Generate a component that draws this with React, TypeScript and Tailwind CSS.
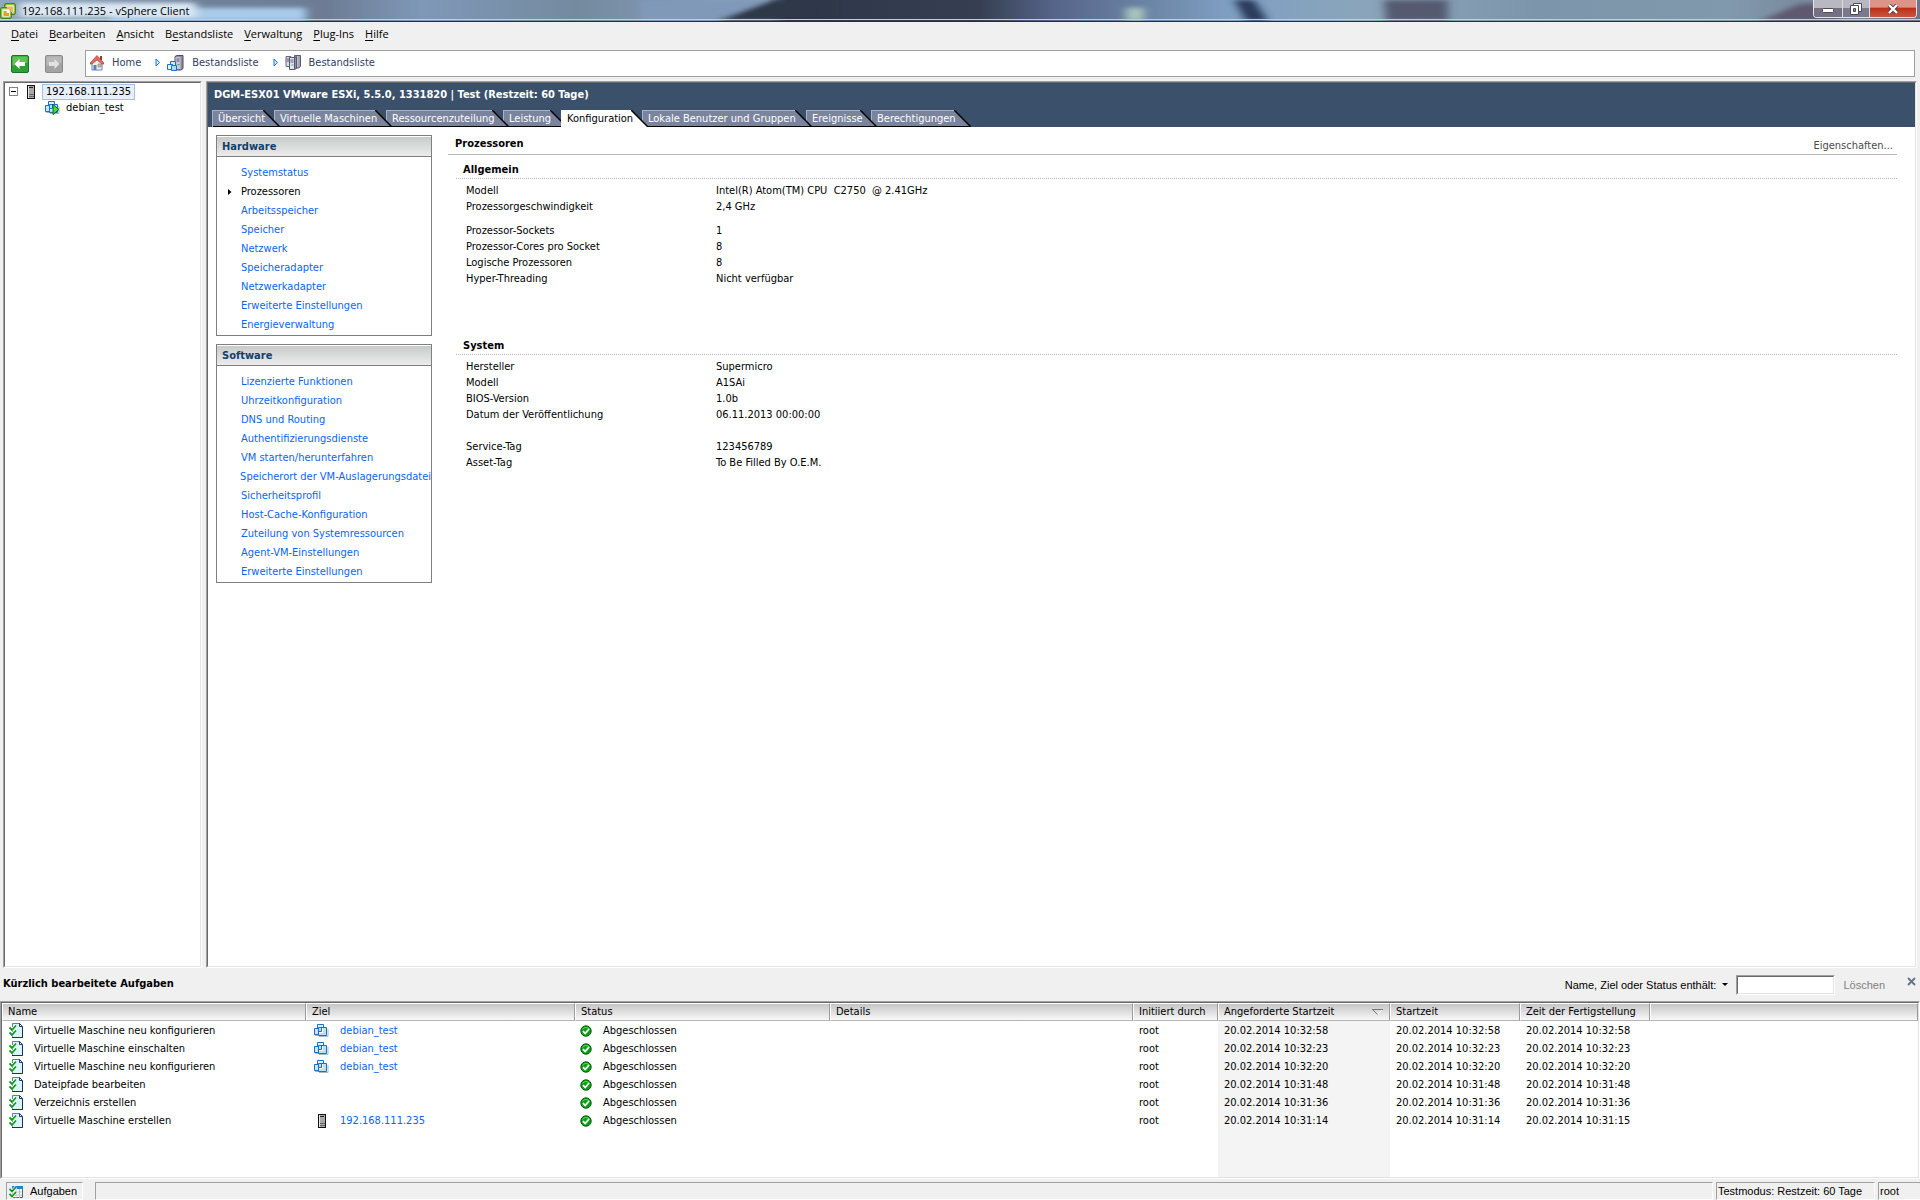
import type { ReactNode } from "react"
import clsx from "clsx"

type Task = {
  name: string
  target?: string
  host?: boolean
  started: string
  finished: string
}

const menus = [
  { before: "", key: "D", after: "atei" },
  { before: "", key: "B", after: "earbeiten" },
  { before: "", key: "A", after: "nsicht" },
  { before: "B", key: "e", after: "standsliste" },
  { before: "", key: "V", after: "erwaltung" },
  { before: "", key: "P", after: "lug-Ins" },
  { before: "", key: "H", after: "ilfe" },
]

// Every tab overlaps the next one by 6px, the left one lies on top
const tabs = [
  { label: "Übersicht", className: "w-[68px] z-8" },
  { label: "Virtuelle Maschinen", className: "w-[118px] z-7" },
  { label: "Ressourcenzuteilung", className: "w-[123px] z-6" },
  { label: "Leistung", className: "w-16 z-5" },
  { label: "Konfiguration", className: "w-[87px] z-9", active: true },
  { label: "Lokale Benutzer und Gruppen", className: "w-[170px] z-3" },
  { label: "Ereignisse", className: "w-[71px] z-2" },
  { label: "Berechtigungen", className: "w-[100px] z-1" },
]

const hardware = [
  "Systemstatus",
  "Prozessoren",
  "Arbeitsspeicher",
  "Speicher",
  "Netzwerk",
  "Speicheradapter",
  "Netzwerkadapter",
  "Erweiterte Einstellungen",
  "Energieverwaltung",
]

const software = [
  "Lizenzierte Funktionen",
  "Uhrzeitkonfiguration",
  "DNS und Routing",
  "Authentifizierungsdienste",
  "VM starten/herunterfahren",
  "Speicherort der VM-Auslagerungsdatei",
  "Sicherheitsprofil",
  "Host-Cache-Konfiguration",
  "Zuteilung von Systemressourcen",
  "Agent-VM-Einstellungen",
  "Erweiterte Einstellungen",
]

const tasks: Task[] = [
  { name: "Virtuelle Maschine neu konfigurieren", target: "debian_test", started: "20.02.2014 10:32:58", finished: "20.02.2014 10:32:58" },
  { name: "Virtuelle Maschine einschalten", target: "debian_test", started: "20.02.2014 10:32:23", finished: "20.02.2014 10:32:23" },
  { name: "Virtuelle Maschine neu konfigurieren", target: "debian_test", started: "20.02.2014 10:32:20", finished: "20.02.2014 10:32:20" },
  { name: "Dateipfade bearbeiten", started: "20.02.2014 10:31:48", finished: "20.02.2014 10:31:48" },
  { name: "Verzeichnis erstellen", started: "20.02.2014 10:31:36", finished: "20.02.2014 10:31:36" },
  { name: "Virtuelle Maschine erstellen", target: "192.168.111.235", host: true, started: "20.02.2014 10:31:14", finished: "20.02.2014 10:31:15" },
]

/* ---------- icons ---------- */

function AppIcon() {
  return (
    <svg width="16" height="16" viewBox="0 0 16 16" fill="none" aria-hidden="true">
      <rect x="5.500" y="1.500" width="9" height="9" rx="1.500" stroke="#3f6b12" strokeWidth="2.800" />
      <rect x="5.500" y="1.500" width="9" height="9" rx="1.500" fill="#f4f6ee" stroke="#8cc63f" strokeWidth="1.400" />
      <rect x="1.500" y="5.500" width="9" height="9" rx="1.500" stroke="#3f6b12" strokeWidth="2.800" />
      <rect x="1.500" y="5.500" width="9" height="9" rx="1.500" fill="#f4f6ee" stroke="#8cc63f" strokeWidth="1.400" />
      <path d="M3.500 8h3v2H9v3H3.500z" fill="#f39a1d" />
      <path d="M7 3.500h6V9h-2.500V6H7z" fill="#f7b64c" />
    </svg>
  )
}

function HostIcon() {
  return (
    <svg width="10" height="14" viewBox="0 0 10 14" shapeRendering="crispEdges" aria-hidden="true">
      <path d="M1 0h8v14H1z" fill="#111" />
      <path d="M2 1h6v12H2z" fill="#a8a8a8" />
      <path d="M2 1h1v12H2z" fill="#e6e6e6" />
      <path d="M3 2h4v1H3z" fill="#222" />
      <path d="M3 9h5v1H3zM3 11h5v1H3z" fill="#666" />
    </svg>
  )
}

function VmIcon({ running = false }: { running?: boolean }) {
  return (
    <svg width="15" height="14" viewBox="0 0 15 14" aria-hidden="true">
      <path d="M5 12.500h9V5M1 11.500h4" fill="none" stroke="#a9b8c6" />
      <path d="M3.500.5h6v7h-6z" fill="#d9f1fc" stroke="#1c6fc4" />
      <path d="M.5 4.500h7v6h-7z" fill="#c2e9fb" stroke="#1c6fc4" />
      <path d="M4.500 3.500h8v8h-8z" fill="#b4e2f8" stroke="#1c6fc4" />
      <path d="M5 7.500h2.500V4" fill="none" stroke="#1c6fc4" />
      <path d="M5 8.500h3.500V4" fill="none" stroke="#fff" />
      {running && <path d="M8 3.500v10l6-5z" fill="#4fd837" stroke="#0c6b12" />}
    </svg>
  )
}

function TaskIcon() {
  return (
    <svg width="15" height="16" viewBox="0 0 15 16" aria-hidden="true">
      <path d="M3.500.5h7l3 3v11h-10z" fill="#d8f6f8" stroke="#5a7fae" />
      <path d="M13.500 4v10.500H3" fill="none" stroke="#1d2f6b" />
      <path d="M10.500.5v3h3z" fill="#fff" stroke="#23366f" />
      <path d="M1 4.500l2 2 4-4M1 9.500l2 2 4-4" fill="none" stroke="#fff" strokeWidth="3" />
      <path d="M.5 4.500l2.500 2.500 4-4.500M.5 9.500l2.500 2.500 4-4.500" fill="none" stroke="#12931c" strokeWidth="1.800" />
    </svg>
  )
}

function TaskGridIcon() {
  return (
    <svg width="14" height="15" viewBox="0 0 14 15" aria-hidden="true">
      <path d="M3.500 2.500h10v11h-10z" fill="#fff" stroke="#5b6470" />
      <path d="M3 2h11v3H3z" fill="#1c84d8" />
      <path d="M7 5v9M10.500 5v9M4 8h9M4 11h9" stroke="#b9c0c8" />
      <path d="M.5 5l2.500 2.500 4-4.500M.5 10l2.500 2.500 4-4.500" fill="none" stroke="#fff" strokeWidth="3" />
      <path d="M.5 5l2.500 2.500 4-4.500M.5 10l2.500 2.500 4-4.500" fill="none" stroke="#12931c" strokeWidth="1.800" />
    </svg>
  )
}

function DoneIcon() {
  return (
    <svg width="12" height="12" viewBox="0 0 12 12" aria-hidden="true">
      <circle cx="6" cy="6" r="5.200" fill="#0da016" stroke="#0a5a10" />
      <path d="M2.500 4.500a4 4 0 0 1 7 0" fill="none" stroke="#58d45c" />
      <path d="M3 6.200l2.200 2.300L9 4" fill="none" stroke="#fff" strokeWidth="1.800" />
    </svg>
  )
}

function HomeIcon() {
  return (
    <svg width="14" height="16" viewBox="0 0 14 16" aria-hidden="true">
      <path d="M2 7l5-5 5 5v8H2z" fill="#eef2f8" stroke="#7584a6" />
      <path d="M10 1h2v4h-2z" fill="#8e3a34" />
      <path d="M7 .5l7 7.500v1h-2L7 5 2 9H0V8z" fill="#e0695f" stroke="#a8392f" strokeWidth=".6" />
      <path d="M3.500 10h3v5h-3z" fill="#5d80b8" />
      <path d="M8 9h3v3H8z" fill="#f6c75a" stroke="#5d6f94" strokeWidth=".6" />
    </svg>
  )
}

function InventoryIcon() {
  return (
    <svg width="17" height="16" viewBox="0 0 17 16" aria-hidden="true">
      <path d="M8 1.500L10 .5h6v13l-2 1.500H8z" fill="#8d8ba3" stroke="#4d4b62" />
      <path d="M8.500 2h5v12h-5z" fill="#c9c8d6" />
      <path d="M9.500 4h3M9.500 6h3" stroke="#5a5870" />
      <path d="M10.500 9h2v1h-2z" fill="#34b24a" />
      <path d="M3.500 6.500h5v5h-5z" fill="#c7ebfb" stroke="#1c6fc4" />
      <path d="M.5 9.500h5v5h-5z" fill="#e2f5fd" stroke="#1c6fc4" />
      <path d="M4.500 10.500h5v5h-5z" fill="#a8dcf5" stroke="#1c6fc4" />
    </svg>
  )
}

function HostsIcon() {
  return (
    <svg width="16" height="16" viewBox="0 0 16 16" aria-hidden="true">
      <path d="M1 1.500h5v10H1z" fill="#dddce6" stroke="#6b6980" />
      <path d="M9.500.5h6v11l-2 1.500h-4z" fill="#a5a3b8" stroke="#5a5870" />
      <path d="M12 1v11" stroke="#dddce6" />
      <path d="M4.500 2.500h5v12h-5z" fill="#e4e3ec" stroke="#5a5870" />
      <path d="M9.500 2.500l2-1v12l-2 1z" fill="#8d8ba3" stroke="#5a5870" />
      <path d="M5.500 5h3M5.500 7h3M1.500 4h2.500M1.500 6h2.500" stroke="#5a5870" />
      <path d="M6.500 9.500h2v1h-2z" fill="#34b24a" />
    </svg>
  )
}

function NavArrow({ flip = false }: { flip?: boolean }) {
  return (
    <svg width="18" height="18" viewBox="0 0 18 18" aria-hidden="true">
      <rect x=".5" y=".5" width="17" height="17" rx="1.500" fill={flip ? "#a3a3a3" : "#2f9e35"} stroke={flip ? "#8a8a8a" : "#1b7424"} />
      <path d="M1.500 1.500h15V8q-8-1-15 3z" fill={flip ? "#b9b9b9" : "#62bf5a"} />
      <path
        d={flip ? "M14.500 9L9.500 4v3H4v4h5.500v3z" : "M3.500 9l5-5v3H14v4H8.500v3z"}
        fill={flip ? "#e2e2e2" : "#fff"}
      />
    </svg>
  )
}

function CrumbArrow() {
  return (
    <svg className="ml-[14px] mr-1.5" width="6" height="9" viewBox="0 0 6 9" aria-hidden="true">
      <path d="M1 1v7l3.500-3.500z" fill="#d6ecff" stroke="#1478e0" />
    </svg>
  )
}

/* ---------- building blocks ---------- */

// Classic two-line sunken frame
function Sunken({ className, children }: { className?: string; children?: ReactNode }) {
  return (
    <div className={clsx("flex border border-t-[#a0a0a0] border-l-[#a0a0a0] border-r-white border-b-white", className)}>
      <div className="flex flex-col flex-1 min-w-0 bg-white border border-t-[#696969] border-l-[#696969] border-r-[#e3e3e3] border-b-[#e3e3e3]">
        {children}
      </div>
    </div>
  )
}

function TitleBar() {
  return (
    <header className="relative flex items-start justify-between h-[22px] border-b border-[#2b2d3c] font-['Open_Sans','Noto_Sans',sans-serif]">
      <svg className="absolute inset-0 w-full h-full" viewBox="0 0 1920 22" preserveAspectRatio="none" aria-hidden="true">
        <defs>
          <linearGradient id="glass">
            <stop offset="0" stopColor="#8fa8c0" />
            <stop offset=".1" stopColor="#6f8299" />
            <stop offset=".17" stopColor="#6d7c94" />
            <stop offset=".22" stopColor="#7f98b8" />
            <stop offset=".3" stopColor="#748a9f" />
            <stop offset=".4" stopColor="#8aa3c2" />
            <stop offset=".41" stopColor="#2e3748" />
            <stop offset=".51" stopColor="#363f52" />
            <stop offset=".55" stopColor="#56658a" />
            <stop offset=".6" stopColor="#6c86a6" />
            <stop offset=".64" stopColor="#7f9fc2" />
            <stop offset=".71" stopColor="#8aa5bb" />
            <stop offset=".8" stopColor="#7d95aa" />
            <stop offset=".9" stopColor="#8199ad" />
            <stop offset="1" stopColor="#6e7385" />
          </linearGradient>
          <filter id="soft" x="-10%" y="-50%" width="120%" height="200%">
            <feGaussianBlur stdDeviation="5 2" />
          </filter>
        </defs>
        <path d="M0 0h1920v22H0z" fill="url(#glass)" />
        <g filter="url(#soft)">
          <path d="M640 0h128l-54 22h-74z" fill="#8199b9" />
          <path d="M772 0h60v22H716z" fill="#2e3748" />
          <path d="M110 8h196v14H110z" fill="#a9cbe9" />
          <path d="M20 3h176v15H20z" fill="#dce8f3" />
          <path d="M1234 0h20l14 22h-22z" fill="#2c3a5c" />
          <path d="M1384 0h64v22h-62z" fill="#555a70" />
          <path d="M1126 8h18v14h-18z" fill="#a9c4bd" />
          <path d="M1800 4h40v18h-80z" fill="#5f5870" />
        </g>
        <path d="M0 20h1920v1H0z" fill="#c4ccd8" />
      </svg>
      <div className="relative flex items-center gap-1.5 h-[22px]">
        <AppIcon />
        <h1 className="text-[11px] leading-4 text-black">192.168.111.235 - vSphere Client</h1>
      </div>
      <div className="relative flex h-[18px] mr-[3px] border border-t-0 border-[#e1e3ea] rounded-b-[4px] overflow-hidden">
        <button type="button" aria-label="Minimieren" className="grid place-items-center w-[29px] border-r border-[#dcdde4] bg-linear-to-b from-[#b9b8c2] from-45% to-[#747081] to-50%">
          <svg width="12" height="6" viewBox="0 0 12 6" className="mt-1" aria-hidden="true">
            <rect x=".5" y=".5" width="11" height="4" rx="1" fill="#fff" stroke="#4c4a5a" />
          </svg>
        </button>
        <button type="button" aria-label="Wiederherstellen" className="grid place-items-center w-[27px] border-r border-[#dcdde4] bg-linear-to-b from-[#b9b8c2] from-45% to-[#7b7a8d] to-50%">
          <svg width="12" height="12" viewBox="0 0 12 12" aria-hidden="true">
            <path d="M3.500.5h8v8h-8z" fill="#fff" stroke="#4c4a5a" />
            <path d="M.5 2.500h8v9h-8z" fill="#fff" stroke="#4c4a5a" />
            <path d="M3.500 5.500h2v3h-2z" fill="#8c8b9c" stroke="#4c4a5a" />
          </svg>
        </button>
        <button type="button" aria-label="Schließen" className="grid place-items-center w-[46px] bg-linear-to-b from-[#dd9488] from-40% via-[#bd3018] via-50% to-[#c8553c]">
          <svg width="12" height="10" viewBox="0 0 12 10" aria-hidden="true">
            <path d="M2 1l8 8M10 1L2 9" stroke="#4a3a44" strokeWidth="4" />
            <path d="M2 1l8 8M10 1L2 9" stroke="#fff" strokeWidth="2.400" />
          </svg>
        </button>
      </div>
    </header>
  )
}

function MenuBar() {
  return (
    <nav aria-label="Menü" className="flex items-center gap-[11px] h-6 px-[11px] font-['Open_Sans','Noto_Sans',sans-serif]">
      {menus.map((m) => (
        <button key={m.key + m.after} type="button" className="text-[11px] leading-4 text-black">
          {m.before}
          <span className="underline underline-offset-2">{m.key}</span>
          {m.after}
        </button>
      ))}
    </nav>
  )
}

function Crumb({ icon, label }: { icon: ReactNode; label: string }) {
  return (
    <a href="#" className="flex items-center gap-2 text-[#33415f]">
      {icon}
      {label}
    </a>
  )
}

function Toolbar() {
  return (
    <div className="flex items-center pl-[11px] pr-[5px] pt-1 pb-1">
      <button type="button" aria-label="Zurück">
        <NavArrow />
      </button>
      <button type="button" aria-label="Vorwärts" disabled className="ml-4">
        <NavArrow flip />
      </button>
      <div className="flex items-center flex-1 h-[27px] ml-[22px] pl-1 pb-0.5 bg-white border border-[#a0a0a0]">
        <Crumb icon={<HomeIcon />} label="Home" />
        <CrumbArrow />
        <Crumb icon={<InventoryIcon />} label="Bestandsliste" />
        <CrumbArrow />
        <Crumb icon={<HostsIcon />} label="Bestandsliste" />
      </div>
    </div>
  )
}

function Tree() {
  return (
    <Sunken className="w-[199px]">
      <ul className="pl-1">
        <li>
          <div className="flex items-center h-[17px]">
            <button type="button" aria-label="Zuklappen" className="grid place-items-center w-[9px] h-[9px] border border-[#848484]">
              <span className="w-[5px] h-px bg-black" />
            </button>
            <span className="ml-2 mr-1.5">
              <HostIcon />
            </span>
            <a href="#" className="px-[3px] leading-[14px] bg-[#e9eff8] border border-[#a3bfe3]">
              192.168.111.235
            </a>
          </div>
          <ul className="pl-9">
            <li className="flex items-center gap-1.5 h-4">
              <VmIcon running />
              <a href="#">debian_test</a>
            </li>
          </ul>
        </li>
      </ul>
    </Sunken>
  )
}

function Tab({ label, className, active }: { label: string; className: string; active?: boolean }) {
  return (
    <button
      type="button"
      role="tab"
      aria-selected={!!active}
      className={clsx("relative flex h-[17px] -mr-1.5 text-left whitespace-nowrap", active ? "text-black" : "text-white", className)}
    >
      <span
        className={clsx(
          "flex-1 min-w-0 h-full border-t border-l",
          active ? "bg-white border-white" : "bg-[#7a849c] border-[#a9b2c4] shadow-[inset_0_-1px_0_#000]"
        )}
      />
      <svg width="17" height="17" viewBox="0 0 17 17" aria-hidden="true">
        <path d="M0 0l17 17H0z" fill={active ? "#fff" : "#7a849c"} />
        {!active && <path d="M0 16.500h17" stroke="#000" />}
        <path d="M0 0l17 17" stroke="#000" strokeWidth="1.500" />
      </svg>
      <span className="absolute left-1.5 top-px">{label}</span>
    </button>
  )
}

function NavBox({ title, items, current }: { title: string; items: string[]; current?: string }) {
  return (
    <nav aria-label={title} className="border border-[#7f7f7f] pb-px">
      <h2 className="h-[21px] pl-[5px] leading-5 font-bold text-[#123f6b] border-b border-[#7f7f7f] border-t border-t-white bg-linear-to-b from-[#c9cbcb] to-[#ebebeb]">
        {title}
      </h2>
      <ul className="pt-1.5">
        {items.map((item) => (
          <li key={item} className="flex items-center h-[19px] whitespace-nowrap">
            <span className="w-6 pl-[11px]">
              {item === current && (
                <svg width="4" height="6" viewBox="0 0 4 6" aria-hidden="true">
                  <path d="M0 0v6l3.500-3z" fill="#000" />
                </svg>
              )}
            </span>
            <a href="#" className={item === current ? "text-black" : "text-[#0a64f5]"}>
              {item}
            </a>
          </li>
        ))}
      </ul>
    </nav>
  )
}

function SectionTitle({ children }: { children: ReactNode }) {
  return <h3 className="h-[17px] pl-[7px] font-bold border-b border-dotted border-[#b4b4b4]">{children}</h3>
}

function Row({ label, value }: { label: string; value: string }) {
  return (
    <div className="flex h-4">
      <dt className="w-[250px]">{label}</dt>
      <dd className="whitespace-pre">{value}</dd>
    </div>
  )
}

function HostPanel() {
  return (
    <Sunken className="flex-1 min-w-0">
      <div className="bg-[#3b516b]">
        <h2 className="pl-1.5 pt-1 h-[27px] font-bold text-white">
          DGM-ESX01 VMware ESXi, 5.5.0, 1331820 | Test (Restzeit: 60 Tage)
        </h2>
        <div role="tablist" className="flex isolate pl-1">
          {tabs.map((t) => (
            <Tab key={t.label} {...t} />
          ))}
        </div>
      </div>
      <div className="flex gap-4 pt-2 pl-2 pr-[18px]">
        <div className="flex flex-col gap-2 w-[216px]">
          <NavBox title="Hardware" items={hardware} current="Prozessoren" />
          <NavBox title="Software" items={software} />
        </div>
        <main className="flex-1 min-w-0">
          <div className="flex items-end justify-between h-5 pl-[7px] pr-1 border-b border-[#b9b9b9]">
            <h2 className="pb-0.5 font-bold">Prozessoren</h2>
            <a href="#" className="text-[#4a4a4a]">Eigenschaften...</a>
          </div>
          <section className="mt-[7px] pl-2">
            <SectionTitle>Allgemein</SectionTitle>
            <dl className="pt-1 pl-2.5">
              <Row label="Modell" value="Intel(R) Atom(TM) CPU  C2750  @ 2.41GHz" />
              <Row label="Prozessorgeschwindigkeit" value="2,4 GHz" />
            </dl>
            <dl className="pt-2 pl-2.5">
              <Row label="Prozessor-Sockets" value="1" />
              <Row label="Prozessor-Cores pro Socket" value="8" />
              <Row label="Logische Prozessoren" value="8" />
              <Row label="Hyper-Threading" value="Nicht verfügbar" />
            </dl>
          </section>
          <section className="mt-[51px] pl-2">
            <SectionTitle>System</SectionTitle>
            <dl className="pt-1 pl-2.5">
              <Row label="Hersteller" value="Supermicro" />
              <Row label="Modell" value="A1SAi" />
              <Row label="BIOS-Version" value="1.0b" />
              <Row label="Datum der Veröffentlichung" value="06.11.2013 00:00:00" />
            </dl>
            <dl className="pt-4 pl-2.5">
              <Row label="Service-Tag" value="123456789" />
              <Row label="Asset-Tag" value="To Be Filled By O.E.M." />
            </dl>
          </section>
        </main>
      </div>
    </Sunken>
  )
}

function HeadCell({ children }: { children?: ReactNode }) {
  return (
    <th scope="col" className="h-[18px] p-0 pl-[5px] font-normal text-left border-t border-t-white border-l border-l-white border-r border-r-[#9a9a9a] border-b border-b-[#b4b4b4] bg-linear-to-b from-[#c6c6c6] to-[#f8f8f8]">
      {children}
    </th>
  )
}

function TaskTable() {
  return (
    <table className="w-full h-full table-fixed border-separate border-spacing-0 whitespace-nowrap">
      <colgroup>
        <col className="w-[304px]" />
        <col className="w-[269px]" />
        <col className="w-[255px]" />
        <col className="w-[303px]" />
        <col className="w-[85px]" />
        <col className="w-[172px]" />
        <col className="w-[130px]" />
        <col className="w-[130px]" />
        <col />
      </colgroup>
      <thead>
        <tr>
          <HeadCell>Name</HeadCell>
          <HeadCell>Ziel</HeadCell>
          <HeadCell>Status</HeadCell>
          <HeadCell>Details</HeadCell>
          <HeadCell>Initiiert durch</HeadCell>
          <HeadCell>
            <span className="flex items-center justify-between pr-1.5">
              Angeforderte Startzeit
              <svg width="11" height="6" viewBox="0 0 11 6" aria-hidden="true">
                <path d="M10.500.5L5.500 5.500" stroke="#fff" />
                <path d="M0 .5h11M.5.5l5 5" stroke="#777" />
              </svg>
            </span>
          </HeadCell>
          <HeadCell>Startzeit</HeadCell>
          <HeadCell>Zeit der Fertigstellung</HeadCell>
          <HeadCell />
        </tr>
      </thead>
      <tbody>
        {/* thin spacer under the header, shaded in the sorted column */}
        <tr className="h-px">
          <td colSpan={5} className="p-0" />
          <td className="p-0 bg-[#f4f4f4]" />
          <td colSpan={3} className="p-0" />
        </tr>
        {tasks.map((t) => (
          <tr key={t.started} className="h-[18px]">
            <td className="p-0 pl-[7px]">
              <span className="flex items-center gap-2.5">
                <TaskIcon />
                {t.name}
              </span>
            </td>
            <td className="p-0 pl-2">
              {t.target && (
                <span className="flex items-center">
                  <span className="flex justify-center w-[15px] mr-[11px]">{t.host ? <HostIcon /> : <VmIcon />}</span>
                  <a href="#" className="text-[#0a64f5]">{t.target}</a>
                </span>
              )}
            </td>
            <td className="p-0 pl-[5px]">
              <span className="flex items-center gap-[11px]">
                <DoneIcon />
                Abgeschlossen
              </span>
            </td>
            <td className="p-0" />
            <td className="p-0 pl-1.5">root</td>
            <td className="p-0 pl-1.5 bg-[#f4f4f4]">{t.started}</td>
            <td className="p-0 pl-1.5">{t.started}</td>
            <td className="p-0 pl-1.5">{t.finished}</td>
            <td className="p-0" />
          </tr>
        ))}
        <tr>
          <td colSpan={5} className="p-0" />
          <td className="p-0 bg-[#f4f4f4]" />
          <td colSpan={3} className="p-0" />
        </tr>
      </tbody>
    </table>
  )
}

function TaskPane() {
  return (
    <section aria-label="Aufgaben">
      <div className="flex items-center justify-between h-[33px] pl-[3px] pr-1">
        <h2 className="pb-0.5 font-bold">Kürzlich bearbeitete Aufgaben</h2>
        <div className="flex items-center font-['Liberation_Sans',Arial,sans-serif]">
          <label htmlFor="filter">Name, Ziel oder Status enthält:</label>
          <button type="button" aria-label="Filterfelder" className="px-1.5">
            <svg width="6" height="3" viewBox="0 0 6 3" aria-hidden="true">
              <path d="M0 0h6L3 3z" fill="#000" />
            </svg>
          </button>
          <Sunken className="w-[99px] h-5 ml-0.5">
            <input id="filter" type="text" className="w-full h-full px-1 outline-none" />
          </Sunken>
          <button type="button" disabled className="ml-2 text-[#808080]">Löschen</button>
          <button type="button" aria-label="Bereich schließen" className="ml-[22px] mb-1.5">
            <svg width="9" height="9" viewBox="0 0 9 9" aria-hidden="true">
              <path d="M1 1l7 7M8 1L1 8" stroke="#66708a" strokeWidth="1.800" />
            </svg>
          </button>
        </div>
      </div>
      <Sunken className="h-[178px]">
        <TaskTable />
      </Sunken>
    </section>
  )
}

function StatusBar() {
  const field = "flex items-center border border-t-[#a0a0a0] border-l-[#a0a0a0] border-r-white border-b-white"
  return (
    <footer className="flex h-[21px] pt-[3px] pl-1.5 font-['Liberation_Sans',Arial,sans-serif]">
      <button type="button" className={clsx(field, "gap-[7px] w-[77px] pl-0.5")}>
        <TaskGridIcon />
        Aufgaben
      </button>
      <div className={clsx(field, "flex-1 ml-3")} />
      <div className={clsx(field, "w-[159px] ml-[3px] pl-px")}>Testmodus: Restzeit: 60 Tage</div>
      <div className={clsx(field, "w-[42px] ml-[3px] pl-px border-r-0")}>root</div>
    </footer>
  )
}

export default function App() {
  return (
    <div className="flex flex-col h-screen bg-[#f0f0f0] text-[11px] leading-4 text-black font-['DejaVu_Sans_Condensed','DejaVu_Sans',sans-serif]">
      <TitleBar />
      <MenuBar />
      <Toolbar />
      <div className="flex flex-1 min-h-0 gap-1 pl-[3px] pr-[3px]">
        <Tree />
        <HostPanel />
      </div>
      <TaskPane />
      <StatusBar />
    </div>
  )
}
